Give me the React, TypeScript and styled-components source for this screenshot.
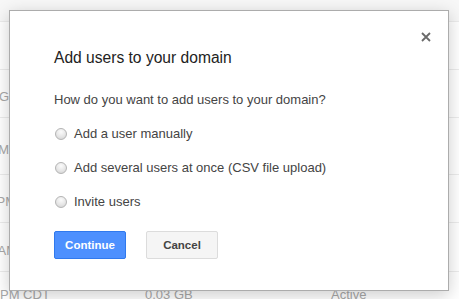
import React from 'react';
import styled, { createGlobalStyle } from 'styled-components';

const GlobalStyle = createGlobalStyle`
  html, body {
    margin: 0;
    padding: 0;
    background: #fff;
    font-family: Arial, "Liberation Sans", sans-serif;
  }
  * { box-sizing: border-box; }
`;

// rows of the user table behind the dialog; only the edges show
type RowType = { height: number; left?: string; leftWidth?: number; size?: string; status?: string };

const rows: RowType[] = [
  { height: 22 },
  { height: 48 },
  { height: 48, left: 'MAIN ORG', leftWidth: 9 },
  { height: 57, left: '11:40 AM', leftWidth: 9 },
  { height: 48, left: '4:05 PM', leftWidth: 16 },
  { height: 49, left: '10:21 AM', leftWidth: 17 },
  { height: 40, left: 'PM CDT', leftWidth: 145, size: '0.03 GB', status: 'Active' },
];

const App: React.FC = () => {
  return (
    <Page>
      <GlobalStyle />
      <Table>
        {rows.map((row, i) => (
          <Row key={i} $height={row.height} $head={i === 0}>
            <LeftCell $width={row.leftWidth ?? 9} $last={i === rows.length - 1}>{row.left}</LeftCell>
            <SizeCell>{row.size}</SizeCell>
            <StatusCell>{row.status}</StatusCell>
          </Row>
        ))}
      </Table>

      <Dialog>
        <CloseButton aria-label="Close">
          <svg width="10" height="10" viewBox="0 0 10 10">
            <path d="M1 1 L9 9 M9 1 L1 9" stroke="#6a6a6a" strokeWidth="1.8" />
          </svg>
        </CloseButton>
        <Title>Add users to your domain</Title>
        <Question>How do you want to add users to your domain?</Question>
        <Options>
          <Option>
            <Radio type="radio" name="mode" />
            Add a user manually
          </Option>
          <Option>
            <Radio type="radio" name="mode" />
            Add several users at once (CSV file upload)
          </Option>
          <Option>
            <Radio type="radio" name="mode" />
            Invite users
          </Option>
        </Options>
        <Buttons>
          <Button $primary>Continue</Button>
          <Button>Cancel</Button>
        </Buttons>
      </Dialog>
    </Page>
  );
};

const Page = styled.div`
  position: relative;
  width: 459px;
  height: 299px;
  overflow: hidden;
  background: #fff;
`;

const Table = styled.div`
  display: flex;
  flex-direction: column;
`;

const Row = styled.div<{ $height: number; $head?: boolean }>`
  height: ${p => p.$height}px;
  display: flex;
  align-items: center;
  border-bottom: 1px solid #ececec;
  background: ${p => (p.$head ? '#f7f7f7' : '#fff')};
  color: #a8a8a8;
  font-size: 13px;
  white-space: nowrap;
`;

const LeftCell = styled.div<{ $width: number; $last?: boolean }>`
  width: ${p => p.$width}px;
  flex-shrink: 0;
  display: flex;
  justify-content: ${p => (p.$last ? 'flex-start' : 'flex-end')};
  padding-top: 6px;
`;

const SizeCell = styled.div`
  width: 186px;
  padding-top: 6px;
`;

const StatusCell = styled.div`
  padding-top: 6px;
`;

const Dialog = styled.div`
  position: absolute;
  top: 10px;
  left: 9px;
  width: 440px;
  height: 281px;
  background: #fff;
  border: 1px solid #acacac;
  box-shadow: 0 4px 16px rgba(0, 0, 0, 0.2);
  padding: 37px 44px 0;
  color: #222;
`;

const CloseButton = styled.button`
  position: absolute;
  top: 18px;
  right: 14px;
  width: 16px;
  height: 16px;
  padding: 0;
  border: none;
  background: none;
  display: flex;
  align-items: center;
  justify-content: center;
`;

const Title = styled.h2`
  margin: 0;
  font-size: 15.6px;
  line-height: 20px;
  font-weight: normal;
  color: #222;
`;

const Question = styled.div`
  margin-top: 23px;
  font-size: 13px;
  line-height: 18px;
  color: #444;
`;

const Options = styled.div`
  margin-top: 15px;
  display: flex;
  flex-direction: column;
  gap: 14px;
`;

const Option = styled.label`
  height: 20px;
  display: flex;
  align-items: center;
  gap: 7px;
  font-size: 13px;
  line-height: 20px;
  color: #444;
`;

const Radio = styled.input`
  appearance: none;
  margin: 0 0 0 1px;
  width: 12px;
  height: 12px;
  border-radius: 50%;
  border: 1px solid #b4b4b4;
  background: radial-gradient(circle at 50% 30%, #fbfbfb 0%, #e6e6e6 55%, #cfcfcf 100%);
`;

const Buttons = styled.div`
  margin-top: 19px;
  display: flex;
  gap: 20px;
`;

const Button = styled.button<{ $primary?: boolean }>`
  width: 72px;
  height: 28px;
  border-radius: 2px;
  font-family: Arial, "Liberation Sans", sans-serif;
  font-size: 11.5px;
  font-weight: bold;
  padding: 0;
  border: 1px solid ${p => (p.$primary ? '#3079ed' : '#dcdcdc')};
  background: ${p => (p.$primary ? '#4d90fe' : '#f5f5f5')};
  color: ${p => (p.$primary ? '#fff' : '#444')};
`;

export default App;
